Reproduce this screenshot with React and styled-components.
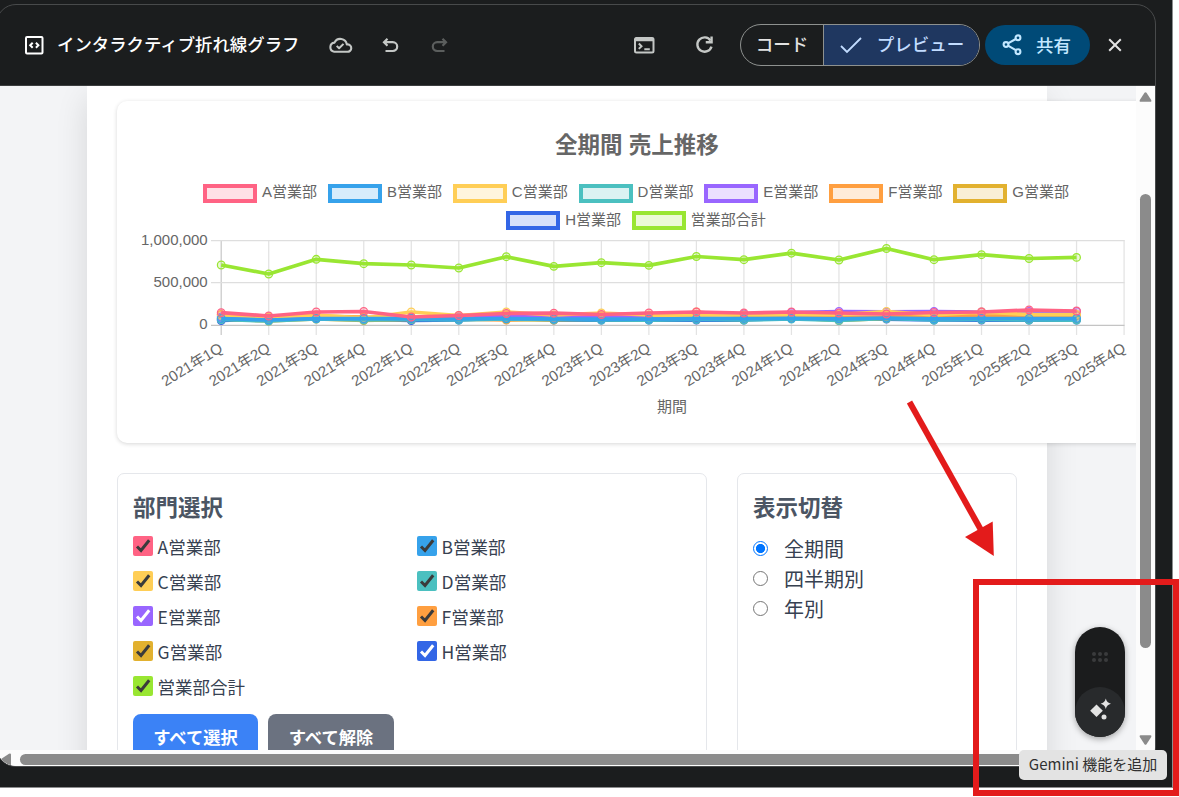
import React, { useState } from "react";
import styled, { createGlobalStyle } from "styled-components";

const GlobalStyle = createGlobalStyle`
    * {
        box-sizing: border-box;
    }
    body {
        margin: 0;
        background: #ffffff;
        font-family: "Noto Sans CJK JP", "Noto Sans", sans-serif;
    }
`

const Screen = styled.div`
    position: relative;
    width: 1179px;
    height: 797px;
    overflow: hidden;
    background: #ffffff;
`

const Backdrop = styled.div`
    width: 1173px;
    height: 788px;
    padding-top: 4px;
    background: #1b1d1e;
    border-right: 1px solid #8c8d8e;
    border-bottom: 1px solid #8c8d8e;
`

const Window = styled.div`
    display: flex;
    flex-direction: column;
    width: 1160px;
    height: 763px;
    margin-left: -4px;
    border: 1px solid #484a4b;
    border-radius: 20px;
    overflow: hidden;
`

const Header = styled.header`
    display: flex;
    align-items: center;
    flex: 0 0 81px;
    padding: 0 15px 1px 25px;
    border-bottom: 1px solid #3c3e3f;
    color: #c4c7c5;
    svg {
        display: block;
        flex: none;
    }
`

const Title = styled.h1`
    margin: 0 28px 2px 11px;
    color: #ffffff;
    font-size: 17.4px;
    font-weight: 500;
    line-height: 24px;
    white-space: nowrap;
`

const IconButton = styled.button`
    display: grid;
    place-items: center;
    width: ${(p) => p.$width || 50}px;
    height: 40px;
    padding: 0;
    border: 0;
    background: none;
    color: inherit;
    opacity: ${(p) => (p.disabled ? 0.38 : 1)};
`

const Spacer = styled.div`
    flex: 1;
`

const Toggle = styled.div`
    display: flex;
    width: 240px;
    height: 42px;
    margin: 1px 5px 0 6px;
    border: 1px solid #8e918f;
    border-radius: 21px;
    overflow: hidden;
`

const ToggleItem = styled.button`
    display: flex;
    align-items: center;
    justify-content: center;
    gap: 14px;
    width: ${(p) => (p.$active ? 156 : 82)}px;
    padding: 0 0 1px;
    border: 0;
    border-left: ${(p) => (p.$active ? "1px solid #8e918f" : "0")};
    background: ${(p) => (p.$active ? "#1f3760" : "transparent")};
    color: ${(p) => (p.$active ? "#c2dcff" : "#e3e3e3")};
    font: 500 17.5px "Noto Sans CJK JP", sans-serif;
    span {
        margin-bottom: 2px;
    }
`

const ShareButton = styled.button`
    display: flex;
    align-items: center;
    justify-content: center;
    gap: 14px;
    width: 105px;
    height: 40px;
    margin-top: 1px;
    padding: 0 2px 0 0;
    border: 0;
    border-radius: 20px;
    background: #004a77;
    color: #c2e7ff;
    font: 500 17.5px "Noto Sans CJK JP", sans-serif;
    span {
        margin-bottom: 2px;
    }
`

const Preview = styled.div`
    display: grid;
    grid-template-columns: 1139px 1fr;
    grid-template-rows: 664px 1fr;
    flex: 1;
    background: #ffffff;
`

const Viewport = styled.div`
    padding-left: 90px;
    overflow: hidden;
    background: #f3f4f6;
`

const Page = styled.main`
    width: 960px;
    height: 900px;
    padding: 15px 30px;
    background: #ffffff;
    box-shadow: 0 12px 30px rgba(0, 0, 0, 0.12);
`

const ChartCard = styled.section`
    display: flex;
    flex-direction: column;
    align-items: center;
    width: 1040px;
    height: 342px;
    padding-top: 31px;
    border-radius: 10px;
    background: #ffffff;
    box-shadow: 0 1px 4px rgba(0, 0, 0, 0.16);
`

const ChartTitle = styled.div`
    color: #666666;
    font: bold 22.5px/28px "Liberation Sans", "Noto Sans CJK JP", sans-serif;
`

const Legend = styled.div`
    display: flex;
    justify-content: center;
    gap: 10.9px;
    padding-right: 2px;
    height: ${(p) => p.$height}px;
    margin-top: ${(p) => p.$top || 0}px;
`

const LegendItem = styled.div`
    display: flex;
    align-items: center;
    gap: 5px;
    height: 20px;
    color: #666666;
    font: 15px/18px "Liberation Sans", "Noto Sans CJK JP", sans-serif;
    span {
        margin-bottom: 2px;
    }
`

const Swatch = styled.i`
    width: 54px;
    height: 19px;
    border: 4px solid ${(p) => p.$color};
    background: ${(p) => p.$color}33;
`

const Plot = styled.svg`
    display: block;
    width: 1040px;
    height: 194px;
    font: 15px "Liberation Sans", "Noto Sans CJK JP", sans-serif;
`

const Controls = styled.div`
    display: flex;
    gap: 30px;
    margin-top: 30px;
`

const Panel = styled.section`
    width: ${(p) => p.$width}px;
    height: 340px;
    padding: 15px;
    border: 1px solid #e5e7eb;
    border-radius: 7px;
`

const PanelTitle = styled.h2`
    margin: 0 0 ${(p) => p.$gap}px;
    color: #4b5563;
    font-size: 22.5px;
    font-weight: 700;
    line-height: 35px;
`

const CheckGrid = styled.div`
    display: grid;
    grid-template-columns: 284px 1fr;
    grid-auto-rows: 35px;
`

const CheckLabel = styled.label`
    display: flex;
    align-items: flex-start;
    gap: 4.6px;
    color: #374151;
    font-size: 17.5px;
    line-height: 21px;
`

const CheckBox = styled.span`
    display: block;
    width: 20px;
    height: 20px;
    border-radius: 2px;
    background: ${(p) => p.$color};
    svg {
        display: block;
    }
`

const ButtonRow = styled.div`
    display: flex;
    gap: 10px;
    margin-top: 3px;
`

const ActionButton = styled.button`
    width: ${(p) => p.$width}px;
    height: 47px;
    padding: 0 0 2px;
    border: 0;
    border-radius: 8px;
    background: ${(p) => p.$color};
    color: #ffffff;
    font: 700 17.3px "Noto Sans CJK JP", sans-serif;
`

const RadioLabel = styled.label`
    display: flex;
    align-items: center;
    gap: 16px;
    height: 30px;
    color: #374151;
    font-size: 20px;
    line-height: 30px;
`

const RadioDot = styled.span`
    width: 15px;
    height: 15px;
    margin-bottom: 1px;
    border: ${(p) => (p.$checked ? "1.5px solid #0075ff" : "1px solid #767676")};
    border-radius: 50%;
    background: ${(p) => (p.$checked ? "radial-gradient(circle, #0075ff 4.2px, #ffffff 5px)" : "#ffffff")};
`

const VerticalBar = styled.div`
    display: flex;
    flex-direction: column;
    align-items: center;
    padding-top: 6px;
    background: #fcfcfc;
`

const VerticalThumb = styled.div`
    width: 11px;
    height: 454px;
    margin: 92px 0 87px;
    border-radius: 6px;
    background: #8b8b8b;
`

const HorizontalBar = styled.div`
    display: flex;
    grid-column: 1 / -1;
    align-items: center;
    padding: 2px 0 0 4px;
    background: #fcfcfc;
`

const HorizontalThumb = styled.div`
    width: 1090px;
    height: 11px;
    margin-left: 8px;
    border-radius: 6px;
    background: #8b8b8b;
`

const GeminiPill = styled.div`
    position: absolute;
    left: 1075px;
    top: 627px;
    display: flex;
    flex-direction: column;
    align-items: center;
    justify-content: space-between;
    width: 50px;
    height: 110px;
    padding-top: 24px;
    border-radius: 25px;
    background: #1b1c1d;
    box-shadow: 0 2px 6px rgba(0, 0, 0, 0.35);
`

const GeminiButton = styled.div`
    display: grid;
    place-items: center;
    width: 50px;
    height: 50px;
    padding-bottom: 6px;
    border-radius: 50%;
    background: #282a2c;
`

const Annotation = styled.svg`
    position: absolute;
    inset: 0;
    pointer-events: none;
`

const Tooltip = styled.div`
    position: absolute;
    left: 1019px;
    top: 750px;
    width: 148px;
    height: 30px;
    border-radius: 5px;
    background: #e3e3e3;
    color: #303030;
    font: 15px/27px "Noto Sans CJK JP", sans-serif;
    text-align: center;
    white-space: nowrap;
`

const departments = [
    { name: "A営業部", color: "#ff6384", values: [312.7, 316, 312, 311.5, 317, 315.5, 313.5, 313.2, 314.5, 313, 312, 313, 312, 313, 314, 312.5, 312, 310, 311] },
    { name: "B営業部", color: "#36a2eb", values: [318.5, 320, 318.5, 318.5, 318.5, 319, 318.5, 319, 319, 319, 318.7, 318.7, 318.3, 318.8, 318, 318.8, 318.5, 318.5, 318.5] },
    { name: "C営業部", color: "#ffce56", values: [315, 317, 315, 318, 312, 315.5, 312, 315, 313, 315, 315, 314.8, 315, 314.5, 311.5, 314.8, 312, 314.5, 314.5] },
    { name: "D営業部", color: "#4bc0c0", values: [319.5, 321, 319, 320, 319.5, 320, 319, 319.5, 320, 320, 319.5, 320, 319, 320.5, 318.5, 320, 319.5, 320, 320] },
    { name: "E営業部", color: "#9966ff", values: [317, 318, 316, 319, 318, 317, 316, 317, 316, 316, 315, 314, 312.5, 311.5, 311.8, 311.5, 312, 311.5, 311.5] },
    { name: "F営業部", color: "#ff9f40", values: [314.5, 318, 316, 317, 319, 319, 320, 318, 316, 318, 312, 316, 315, 317, 317, 315, 316, 315.5, 315.5] },
    { name: "G営業部", color: "#e2b12f", values: [319, 321, 319, 320.5, 319.5, 318, 319.5, 320, 319, 318, 319, 319.5, 318, 320.5, 318.5, 318, 319, 319, 319] },
    { name: "H営業部", color: "#3366e6", values: [320.5, 319, 317.5, 319.5, 320.5, 320, 318, 320, 320, 320, 320, 320, 318, 319, 319, 320, 320, 320, 320] },
    { name: "営業部合計", color: "#99e632", values: [265, 274, 259.3, 263.7, 265, 268, 256.7, 266.3, 262.7, 265.3, 256.5, 259.7, 253.2, 260, 248.5, 259.7, 254.7, 258.5, 257.4] },
]

const lightTicks = ["E営業部", "H営業部"]

const quarters = Array.from({ length: 20 }, (_, i) => `${2021 + Math.floor(i / 4)}年${(i % 4) + 1}Q`)

const xAt = (i) => 221.2 + i * 47.52

const Chart = () => (
    <Plot viewBox="117 231 1040 194">
        {quarters.map((q, i) => (
            <line key={q} x1={xAt(i)} x2={xAt(i)} y1="240" y2="335" stroke={i === 0 ? "#c9c9c9" : "#e3e3e3"} strokeWidth="1.25" />
        ))}
        {[240.5, 282.5, 325.3].map((y, i) => (
            <line key={y} x1="211" x2="1124.5" y1={y} y2={y} stroke={i === 2 ? "#c4c4c4" : "#dedede"} strokeWidth="1.25" />
        ))}
        {["1,000,000", "500,000", "0"].map((label, i) => (
            <text key={label} x="207.7" y={245.3 + i * 42} textAnchor="end" fill="#666666">{label}</text>
        ))}
        {[...departments].reverse().map(({ name, color, values }) => (
            <g key={name} stroke={color}>
                <polyline points={values.map((v, i) => `${xAt(i)},${v}`).join(" ")} fill="none" strokeWidth="3.75" strokeLinejoin="round" />
                {values.map((v, i) => (
                    <circle key={i} cx={xAt(i)} cy={v} r="3.8" fill={`${color}33`} strokeWidth="1.25" />
                ))}
            </g>
        ))}
        {quarters.map((q, i) => (
            <text key={q} transform={`translate(${xAt(i) + 2.6} 351) rotate(-31.5)`} textAnchor="end" fill="#666666">{q}</text>
        ))}
        <text x="672" y="411.5" textAnchor="middle" fill="#666666">期間</text>
    </Plot>
)

const LegendRow = ({ items, top, height }) => (
    <Legend $top={top} $height={height}>
        {items.map(({ name, color }) => (
            <LegendItem key={name}>
                <Swatch $color={color} />
                <span>{name}</span>
            </LegendItem>
        ))}
    </Legend>
)

const App = () => {
    const [ view, setView ] = useState("全期間");

    return (
        <Screen>
            <GlobalStyle />
            <Backdrop>
                <Window>
                    <Header>
                        <svg width="24" height="24" viewBox="0 0 24 24" fill="none" stroke="#ffffff" strokeWidth="2">
                            <rect x="4" y="4" width="16.5" height="16.5" rx="1" />
                            <path d="M10.7 9.7 8.2 12.2l2.5 2.5M13.9 9.7l2.5 2.5-2.5 2.5" />
                        </svg>
                        <Title>インタラクティブ折れ線グラフ</Title>
                        <svg width="26" height="24" viewBox="0 0 26 24" fill="none" stroke="currentColor" strokeWidth="2.100" strokeLinecap="round" strokeLinejoin="round">
                            <path d="M7.200 18.800H20.300a3.700 3.700 0 0 0 .500-7.400H19.800A6.500 6.500 0 0 0 7.500 9.600 4.650 4.650 0 0 0 7.200 18.800z" />
                            <path d="m9.700 12.900 2.400 2.400 4.400-4.400" strokeWidth="2" strokeLinecap="butt" />
                        </svg>
                        <IconButton $width={74}>
                            <svg width="24" height="24" viewBox="0 0 24 24" fill="none" stroke="currentColor" strokeWidth="2.2">
                                <path d="M9.500 5.700 6 9.200l3.500 3.500M6.300 9.200h8.500a4.400 4.400 0 0 1 0 8.800H7.500" />
                            </svg>
                        </IconButton>
                        <IconButton $width={26} disabled>
                            <svg width="24" height="24" viewBox="0 0 24 24" fill="none" stroke="currentColor" strokeWidth="2.2">
                                <path d="m14.500 5.700 3.500 3.500-3.500 3.500M17.700 9.200H9.200a4.400 4.400 0 0 0 0 8.800h7.300" />
                            </svg>
                        </IconButton>
                        <Spacer />
                        <IconButton $width={60}>
                            <svg width="24" height="24" viewBox="0 0 24 24" fill="none" stroke="currentColor" strokeWidth="2">
                                <rect x="3" y="5" width="18.5" height="14.500" rx="1.5" />
                                <path d="M3 6.500h18.500" strokeWidth="3.400" />
                                <path d="m6.800 10.500 2.700 2.700-2.700 2.700M12.300 16.200h5.500" strokeWidth="2" />
                            </svg>
                        </IconButton>
                        <IconButton $width={60}>
                            <svg width="25" height="25" viewBox="0 0 24 24" fill="none" stroke="currentColor" strokeWidth="2.300">
                                <path d="M18.700 14a6.900 6.900 0 1 1-.900-5.800" />
                                <path d="M18.800 4.300v5.600h-5.600" />
                            </svg>
                        </IconButton>
                        <Toggle>
                            <ToggleItem><span>コード</span></ToggleItem>
                            <ToggleItem $active>
                                <svg width="24" height="20" viewBox="0 0 24 20" fill="none" stroke="currentColor" strokeWidth="1.8">
                                    <path d="m2 11 6 6L22 3" />
                                </svg>
                                <span>プレビュー</span>
                            </ToggleItem>
                        </Toggle>
                        <ShareButton>
                            <svg width="20" height="24" viewBox="0 0 20 24" fill="none" stroke="currentColor" strokeWidth="2.100">
                                <circle cx="4" cy="11.500" r="2.400" />
                                <circle cx="16" cy="4.800" r="2.400" />
                                <circle cx="16" cy="18.700" r="2.400" />
                                <path d="m6 10.300 7.800-4.300M6 12.700l7.800 4.500" />
                            </svg>
                            <span>共有</span>
                        </ShareButton>
                        <IconButton>
                            <svg width="14" height="14" viewBox="0 0 14 14" stroke="#e3e3e3" strokeWidth="2">
                                <path d="m1.200 1.200 11.600 11.600m0-11.600L1.200 12.800" />
                            </svg>
                        </IconButton>
                    </Header>
                    <Preview>
                        <Viewport>
                            <Page>
                                <ChartCard>
                                    <ChartTitle>全期間 売上推移</ChartTitle>
                                    <LegendRow items={departments.slice(0, 7)} top={23} height={27.5} />
                                    <LegendRow items={departments.slice(7)} height={20.5} />
                                    <Chart />
                                </ChartCard>
                                <Controls>
                                    <Panel $width={590}>
                                        <PanelTitle $gap={12}>部門選択</PanelTitle>
                                        <CheckGrid>
                                            {departments.map(({ name, color }) => (
                                                <CheckLabel key={name}>
                                                    <CheckBox $color={color}>
                                                        <svg width="20" height="20" viewBox="0 0 20 20" fill="none">
                                                            <path d="m4 10.500 4 4L16.200 4.200" stroke={lightTicks.includes(name) ? "#ffffff" : "#3b3b3b"} strokeWidth="3" />
                                                        </svg>
                                                    </CheckBox>
                                                    {name}
                                                </CheckLabel>
                                            ))}
                                        </CheckGrid>
                                        <ButtonRow>
                                            <ActionButton $width={125} $color="#3b82f6">すべて選択</ActionButton>
                                            <ActionButton $width={126} $color="#6b7280">すべて解除</ActionButton>
                                        </ButtonRow>
                                    </Panel>
                                    <Panel $width={280}>
                                        <PanelTitle $gap={10}>表示切替</PanelTitle>
                                        {["全期間", "四半期別", "年別"].map(v => (
                                            <RadioLabel key={v} onClick={() => setView(v)}>
                                                <RadioDot $checked={view === v} />
                                                {v}
                                            </RadioLabel>
                                        ))}
                                    </Panel>
                                </Controls>
                            </Page>
                        </Viewport>
                        <VerticalBar>
                            <svg width="13" height="10" viewBox="0 0 13 10" fill="#8b8b8b">
                                <path d="M5.500.800q1-1.200 2 0L12.200 8q.600 1.700-.800 1.800H1.600Q.200 9.700.800 8z" />
                            </svg>
                            <VerticalThumb />
                            <svg width="13" height="10" viewBox="0 0 13 10" fill="#8b8b8b">
                                <path d="M5.500 9.200q1 1.200 2 0L12.200 2q.600-1.700-.800-1.800H1.600Q.200.300.800 2z" />
                            </svg>
                        </VerticalBar>
                        <HorizontalBar>
                            <svg width="11" height="13" viewBox="0 0 11 13" fill="#8b8b8b">
                                <path d="M.800 5.500q-1.200 1 0 2L8 12.200q2 .600 2-.800V1.600Q10 .200 8 .800z" />
                            </svg>
                            <HorizontalThumb />
                        </HorizontalBar>
                    </Preview>
                </Window>
            </Backdrop>
            <GeminiPill>
                <svg width="16" height="12" viewBox="0 0 16 12" fill="#3a3b3d">
                    {[2, 8, 14].map(x => [3, 9].map(y => <circle key={`${x}-${y}`} cx={x} cy={y} r="2" />))}
                </svg>
                <GeminiButton>
                    <svg width="24" height="24" viewBox="0 0 24 24" fill="#e3e3e3">
                        <path d="m8.500 7.500 6.300 6.300-6.300 6.300-6.300-6.300z" />
                        <path d="M17.800 1.500q1 4.200 5.200 5.200-4.200 1-5.200 5.200-1-4.200-5.200-5.200 4.200-1 5.200-5.200z" />
                        <circle cx="16" cy="20" r="2.500" />
                    </svg>
                </GeminiButton>
            </GeminiPill>
            <Annotation width="1179" height="797" viewBox="0 0 1179 797">
                <rect x="976" y="582" width="200" height="211" fill="none" stroke="#e31b1b" strokeWidth="6" />
                <path d="M909.500 402 981 530" stroke="#e31b1b" strokeWidth="6" />
                <path d="M992.700 521.500 993.800 556 965 537z" fill="#e31b1b" />
            </Annotation>
            <Tooltip>Gemini 機能を追加</Tooltip>
        </Screen>
    )
}

export default App;
